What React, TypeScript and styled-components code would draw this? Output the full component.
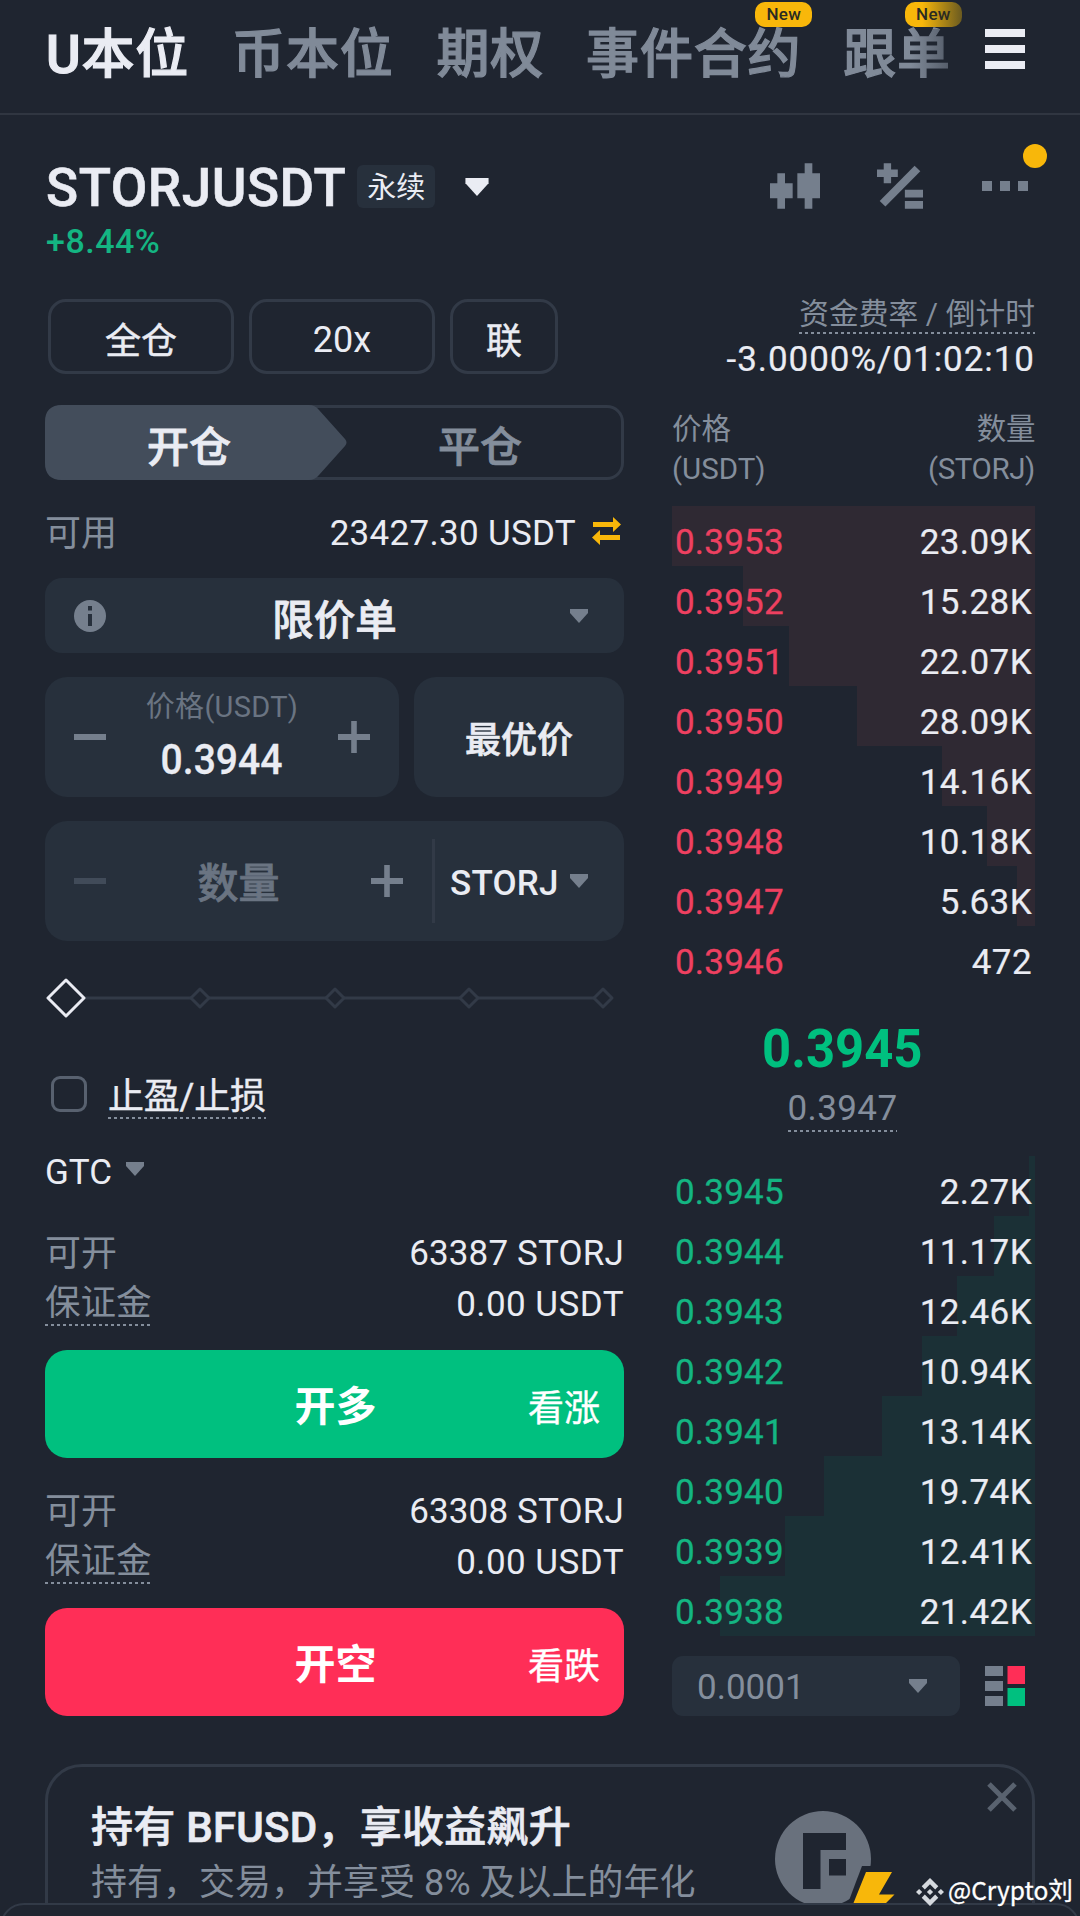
import React from "react";
import styled, { createGlobalStyle, css } from "styled-components";

const c = {
  bg: "#1f2530",
  field: "#27303c",
  line: "#323a47",
  text: "#eaecf3",
  mute: "#848e9c",
  icon: "#757f8d",
  dim: "#6a7482",
  gold: "#f8b70a",
  green: "#00c07f",
  priceUp: "#14b582",
  red: "#ff2e57",
  priceDown: "#ee4060",
};

const Global = createGlobalStyle`
  * { box-sizing: border-box; }
  html, body { margin: 0; padding: 0; background: ${c.bg}; }
  body { width: 1080px; height: 1916px; overflow: hidden; }
`;

const Page = styled.div`
  width: 1080px;
  height: 1916px;
  overflow: hidden;
  position: relative;
  background: ${c.bg};
  color: ${c.text};
  font-family: Roboto, "Noto Sans CJK SC", sans-serif;
  font-size: 35px;
  line-height: 1;
  white-space: nowrap;
`;

type TextProps = {
  $size?: number;
  $weight?: number;
  $color?: string;
  $ls?: number;
  $dy?: number;
  $bold?: number;
  $sx?: number;
};

const Txt = styled.span<TextProps>`
  display: block;
  font-size: ${(p) => p.$size ?? 35}px;
  font-weight: ${(p) => p.$weight ?? 400};
  color: ${(p) => p.$color ?? "inherit"};
  letter-spacing: ${(p) => p.$ls ?? 0}px;
  line-height: 40px;
  ${(p) => p.$dy !== undefined && css`margin-top: ${p.$dy}px;`}
  ${(p) => p.$bold !== undefined && css`-webkit-text-stroke: ${p.$bold}px currentColor;`}
  ${(p) => p.$sx !== undefined && css`transform: scaleX(${p.$sx});`}
`;

const Dotted = styled(Txt)<{ $pad?: number }>`
  padding-bottom: ${(p) => p.$pad ?? 3}px;
  background: repeating-linear-gradient(90deg, ${c.mute} 0 3px, transparent 3px 6px) left bottom / 100% 2px no-repeat;
`;

/* ---------- top navigation ---------- */

const Nav = styled.nav`
  height: 115px;
  border-bottom: 2px solid #303641;
  padding: 29px 55px 0 46px;
  display: flex;
  align-items: flex-start;
`;

const NavItem = styled.div<{ $active?: boolean; $gap: number }>`
  position: relative;
  font-size: 53px;
  line-height: 52px;
  font-weight: 500;
  letter-spacing: 0.8px;
  -webkit-text-stroke: 1.2px currentColor;
  margin-right: ${(p) => p.$gap}px;
  color: ${(p) => (p.$active ? c.text : "#808a98")};
`;

const NewBadge = styled.span<{ $fade?: boolean }>`
  position: absolute;
  top: -27px;
  right: -11px;
  width: 57px;
  height: 25px;
  border-radius: 10px;
  background: ${(p) => (p.$fade ? `linear-gradient(90deg, ${c.gold} 30%, #6a5a20 100%)` : c.gold)};
  color: #2a2a22;
  font-size: 17px;
  line-height: 25px;
  font-weight: 500;
  letter-spacing: 0.3px;
  text-align: center;
  -webkit-text-stroke: 0;
`;

const NavFade = styled.span`
  position: absolute;
  top: 0;
  right: -20px;
  width: 60px;
  height: 56px;
  background: linear-gradient(90deg, rgba(31, 37, 48, 0), rgba(31, 37, 48, 0.7));
`;

const Burger = styled.div`
  width: 40px;
  height: 40px;
  margin: 0 0 0 auto;
  display: flex;
  flex-direction: column;
  justify-content: space-between;
  & > i { height: 8px; background: ${c.text}; }
`;

/* ---------- pair header ---------- */

const PairHead = styled.header`
  height: 184px;
  padding: 47px 45px 0 46px;
  display: flex;
  justify-content: space-between;
`;

const PairRow = styled.div`
  display: flex;
  align-items: center;
  height: 50px;
`;

const Perp = styled.span`
  width: 78px;
  height: 43px;
  margin: -1px 30px 0 11px;
  border-radius: 6px;
  background: ${c.field};
  display: flex;
  align-items: center;
  justify-content: center;
  font-size: 29px;
  padding-top: 3px;
`;

const HeadIcons = styled.div`
  display: flex;
  align-items: flex-start;
  height: 60px;
  margin-top: 1px;
  svg { display: block; }
`;

const MoreWrap = styled.div`
  position: relative;
  margin: 18px 7px 0 59px;
`;

const Notice = styled.i`
  position: absolute;
  width: 24px;
  height: 24px;
  border-radius: 50%;
  background: ${c.gold};
  left: 41px;
  top: -37px;
`;

/* ---------- body columns ---------- */

const Columns = styled.main`
  height: 1465px;
  padding: 0 45px;
  display: grid;
  grid-template-columns: 579px 363px;
  column-gap: 48px;
`;

const Col = styled.section`
  display: flex;
  flex-direction: column;
  min-width: 0;
`;

const Modes = styled.div`
  display: flex;
  gap: 15px;
  padding-left: 3px;
`;

const ModeBtn = styled.button<{ $w: number; $latin?: boolean }>`
  width: ${(p) => p.$w}px;
  height: 75px;
  padding: ${(p) => (p.$latin ? 7 : 2)}px 0 0;
  border: 3px solid ${c.line};
  border-radius: 18px;
  background: none;
  color: ${c.text};
  font: 400 36px Roboto, "Noto Sans CJK SC", sans-serif;
  -webkit-text-stroke: ${(p) => (p.$latin ? 0 : 0.5)}px currentColor;
`;

const Tabs = styled.div`
  height: 75px;
  margin-top: 31px;
  display: grid;
  grid-template-columns: 302px 1fr;
  border-radius: 17px;
  box-shadow: inset 0 0 0 3px ${c.line};
`;

const Tab = styled.div<{ $active?: boolean }>`
  display: grid;
  align-items: center;
  font-size: 42px;
  line-height: 42px;
  font-weight: 500;
  -webkit-text-stroke: 0.8px currentColor;
  color: ${(p) => (p.$active ? c.text : c.mute)};
  text-align: center;
  & > * { grid-area: 1 / 1; }
  span { padding: 11px ${(p) => (p.$active ? 14 : 11)}px 0 0; z-index: 1; }
  svg { display: block; }
`;

const Row = styled.div<{ $h: number; $pt?: number; $align?: string }>`
  display: flex;
  align-items: ${(p) => p.$align ?? "center"};
  justify-content: space-between;
  height: ${(p) => p.$h}px;
  padding-top: ${(p) => p.$pt ?? 0}px;
`;

const Group = styled.div<{ $gap?: number }>`
  display: flex;
  align-items: center;
  gap: ${(p) => p.$gap ?? 0}px;
`;

const SwapIcon = styled.svg`
  margin: -6px 3px 0 0;
`;

const Field = styled.div<{ $h: number; $px?: number; $r?: number }>`
  height: ${(p) => p.$h}px;
  padding: 0 ${(p) => p.$px ?? 0}px;
  border-radius: ${(p) => p.$r ?? 22}px;
  background: ${c.field};
  display: flex;
  align-items: center;
  justify-content: space-between;
`;

const OrderType = styled(Field)`
  padding-right: 36px;
  & > span { padding-right: 7px; }
`;

const PriceRow = styled.div`
  display: grid;
  grid-template-columns: 354px 210px;
  gap: 15px;
  margin: 24px 0;
`;

const Stack = styled.div`
  display: flex;
  flex-direction: column;
  align-items: center;
`;

const Center = styled.div`
  flex: 1;
  display: flex;
  justify-content: center;
`;

const Divider = styled.i`
  width: 3px;
  height: 84px;
  background: ${c.line};
`;

const SizeUnit = styled.div`
  display: flex;
  align-items: center;
  justify-content: space-between;
  width: 189px;
  padding: 0 36px 0 15px;
`;

const SizeInput = styled.div`
  flex: 1;
  display: flex;
  align-items: center;
  padding: 0 29px 0 29px;
`;

const SliderSvg = styled.svg`
  display: block;
  margin-top: 32px;
`;

const Check = styled.i`
  width: 36px;
  height: 36px;
  margin: -9px 21px 0 6px;
  border: 3px solid #58616f;
  border-radius: 9px;
`;

const TradeBtn = styled.button<{ $bg: string }>`
  height: 108px;
  width: 100%;
  border: 0;
  border-radius: 22px;
  padding: 0 24px 3px 26px;
  background: ${(p) => p.$bg};
  color: #fff;
  display: grid;
  grid-template-columns: 1fr auto 1fr;
  align-items: center;
  font-family: inherit;
`;

const TradeSide = styled.span`
  font-size: 36px;
  text-align: right;
  padding-top: 5px;
  -webkit-text-stroke: 0.4px currentColor;
`;

const TradeMain = styled.span`
  grid-column: 2;
  font-size: 41px;
  font-weight: 700;
`;

/* ---------- order book ---------- */

const Funding = styled.div`
  height: 110px;
  display: flex;
  flex-direction: column;
  align-items: flex-end;
`;

const BookHead = styled.div`
  display: flex;
  justify-content: space-between;
  height: 97px;
  line-height: 40px;
  font-size: 29.5px;
  color: ${c.mute};
  & > div:last-child { text-align: right; letter-spacing: -0.4px; }
`;

const BookRow = styled.div<{ $ask?: boolean }>`
  height: 60px;
  padding: 12px 3px 0 3px;
  display: flex;
  justify-content: space-between;
  background: linear-gradient(${(p) => (p.$ask ? "#2f2933, #2f2933" : "#1b3036, #1b3036")}) no-repeat right top;
`;

const Last = styled.div`
  height: 170px;
  padding: 43px 22px 0 0;
  display: flex;
  flex-direction: column;
  align-items: center;
`;

const BookFoot = styled.div`
  display: flex;
  margin-top: 20px;
  gap: 25px;
  align-items: center;
`;

const Step = styled.div`
  width: 288px;
  height: 60px;
  border-radius: 11px;
  background: ${c.field};
  display: flex;
  align-items: center;
  justify-content: space-between;
  padding: 0 33px 0 25px;
`;

/* ---------- promo ---------- */

const Promo = styled.aside`
  height: 180px;
  margin: 0 45px;
  border: 3px solid ${c.line};
  border-radius: 37px 37px 0 0;
  padding: 37px 15px 0 43px;
  display: flex;
  justify-content: space-between;
`;

const PromoArt = styled.div`
  display: flex;
  margin-top: -22px;
  svg { display: block; }
`;

const CoinArt = styled.svg`
  margin: 29px 90px 0 0;
`;

const Sheet = styled.div`
  position: absolute;
  left: 0;
  right: 0;
  top: 1903px;
  height: 40px;
  border: 2px solid ${c.line};
  border-radius: 24px 24px 0 0;
  background: ${c.bg};
`;

const Watermark = styled.div`
  position: absolute;
  left: 916px;
  top: 1875px;
  display: flex;
  align-items: center;
  gap: 4px;
  height: 34px;
  color: #fff;
  font: 400 24.5px "Noto Sans CJK SC", sans-serif;
  span { margin-top: -5px; -webkit-text-stroke: 0.3px currentColor; }
`;

const Caret = ({ w = 18, h = 14, color = c.icon }: { w?: number; h?: number; color?: string }) => (
  <svg width={w} height={h} viewBox="0 0 18 14">
    <path d="M0 0H18V4L9 14L0 4Z" fill={color} />
  </svg>
);

const Minus = ({ color = c.icon }: { color?: string }) => (
  <svg width="32" height="32" viewBox="0 0 32 32">
    <rect y="13" width="32" height="6" fill={color} />
  </svg>
);

const Plus = () => (
  <svg width="32" height="32" viewBox="0 0 32 32">
    <path d="M13.2 0H18.8V13H32V19H18.8V32H13.2V19H0V13H13.2Z" fill={c.icon} />
  </svg>
);

const asks: [string, string, number][] = [
  ["0.3953", "23.09K", 363],
  ["0.3952", "15.28K", 292],
  ["0.3951", "22.07K", 246],
  ["0.3950", "28.09K", 178],
  ["0.3949", "14.16K", 93],
  ["0.3948", "10.18K", 48],
  ["0.3947", "5.63K", 18],
  ["0.3946", "472", 0],
];

const bids: [string, string, number][] = [
  ["0.3945", "2.27K", 6],
  ["0.3944", "11.17K", 41],
  ["0.3943", "12.46K", 78],
  ["0.3942", "10.94K", 113],
  ["0.3941", "13.14K", 153],
  ["0.3940", "19.74K", 211],
  ["0.3939", "12.41K", 250],
  ["0.3938", "21.42K", 315],
];

const Book = ({ rows, ask }: { rows: [string, string, number][]; ask?: boolean }) => (
  <div>
    {rows.map(([price, qty, depth]) => (
      <BookRow key={price} $ask={ask} style={{ backgroundSize: `${depth}px 60px` }}>
        <Txt $dy={5} $ls={0.2} $bold={0.3} $color={ask ? c.priceDown : c.priceUp}>{price}</Txt>
        <Txt $dy={5} $ls={0.4} $bold={0.2}>{qty}</Txt>
      </BookRow>
    ))}
  </div>
);

const Trade = ({ max, label, hint, color }: { max: string; label: string; hint: string; color: string }) => (
  <>
    <Row $h={50} $pt={2}>
      <Txt $color={c.mute} $size={36}>可开</Txt>
      <Txt $ls={0.15}>{max}</Txt>
    </Row>
    <Row $h={72} $align="flex-start" $pt={5}>
      <Dotted $color={c.mute} $size={35.5} $pad={3}>保证金</Dotted>
      <Txt $dy={2} $ls={0.45}>0.00 USDT</Txt>
    </Row>
    <TradeBtn $bg={color}>
      <TradeMain>{label}</TradeMain>
      <TradeSide>{hint}</TradeSide>
    </TradeBtn>
  </>
);

const smallDiamonds = [155, 290, 424, 558];

export default function App() {
  return (
    <Page>
      <Global />
      <Nav>
        <NavItem $active $gap={43}>U本位</NavItem>
        <NavItem $gap={43}>币本位</NavItem>
        <NavItem $gap={42}>期权</NavItem>
        <NavItem $gap={42}>事件合约<NewBadge>New</NewBadge></NavItem>
        <NavItem $gap={0}>跟单<NewBadge $fade>New</NewBadge><NavFade /></NavItem>
        <Burger><i /><i /><i /></Burger>
      </Nav>

      <PairHead>
        <div>
          <PairRow>
            <Txt $size={53} $weight={500} $ls={0.55} $bold={0.6} $dy={1}>STORJUSDT</Txt>
            <Perp>永续</Perp>
            <Caret w={24} h={18} color={c.text} />
          </PairRow>
          <Txt $size={34} $weight={500} $ls={0.5} $color={c.priceUp} $dy={9}>+8.44%</Txt>
        </div>
        <HeadIcons>
          <svg width="50" height="46" viewBox="0 0 150 136" fill={c.icon}>
            <path d="M22 30H45V60H68V105H45V136H22V105H0V60H22Z" />
            <path d="M104 0H127V30H150V105H127V136H104V105H82V30H104Z" />
          </svg>
          <svg width="46" height="46" viewBox="0 0 137 136" fill={c.icon} style={{ marginLeft: 57 }}>
            <path d="M20 0H42V19H62V41H42V60H20V41H0V19H20Z" />
            <path d="M112 8L129 24L25 129L8 113Z" />
            <path d="M83 79H137V102H83ZM83 113H137V136H83Z" />
          </svg>
          <MoreWrap>
            <svg width="46" height="10" viewBox="0 0 46 10" fill={c.icon}>
              <path d="M0 0H10V10H0ZM18 0H28V10H18ZM36 0H46V10H36Z" />
            </svg>
            <Notice />
          </MoreWrap>
        </HeadIcons>
      </PairHead>

      <Columns>
        <Col>
          <Modes>
            <ModeBtn $w={186}>全仓</ModeBtn>
            <ModeBtn $w={186} $latin>20x</ModeBtn>
            <ModeBtn $w={108}>联</ModeBtn>
          </Modes>

          <Tabs>
            <Tab $active>
              <svg width="302" height="75" viewBox="0 0 302 75">
                <path d="M17 0H264Q270 0 274 5L300 34Q303 37.500 300 41L274 70Q270 75 264 75H17Q0 75 0 58V17Q0 0 17 0Z" fill="#434d5b" />
              </svg>
              <span>开仓</span>
            </Tab>
            <Tab><span>平仓</span></Tab>
          </Tabs>

          <Row $h={98} $pt={10}>
            <Txt $color={c.mute} $size={36}>可用</Txt>
            <Group $gap={16}>
              <Txt $ls={0.3}>23427.30 USDT</Txt>
              <SwapIcon width="29" height="28" viewBox="0 0 29 28" fill={c.gold}>
                <path d="M1 5H21V0L29 7.500L21 15V10H1Z" />
                <path d="M28 18H8V13L0 20.500L8 28V23H28Z" />
              </SwapIcon>
            </Group>
          </Row>

          <OrderType $h={75} $px={29} $r={17}>
            <svg width="32" height="32" viewBox="0 0 32 32">
              <circle cx="16" cy="16" r="16" fill={c.icon} />
              <path d="M14 6H18V10.500H14ZM14 14H18V26H14Z" fill={c.field} />
            </svg>
            <Txt $size={41.5} $weight={500} $bold={0.8} $dy={10}>限价单</Txt>
            <Caret />
          </OrderType>

          <PriceRow>
            <Field $h={120} $px={29}>
              <Minus />
              <Stack>
                <Txt $size={29} $color={c.dim} $ls={0.3} $dy={-8}>价格(USDT)</Txt>
                <Txt $size={42} $weight={500} $sx={0.93} $bold={0.3} $dy={13}>0.3944</Txt>
              </Stack>
              <Plus />
            </Field>
            <Field $h={120}>
              <Center><Txt $size={36} $weight={500} $bold={0.7} $dy={7}>最优价</Txt></Center>
            </Field>
          </PriceRow>

          <Field $h={120}>
            <SizeInput>
              <Minus color="#414b59" />
              <Center><Txt $size={41} $weight={500} $bold={0.8} $color={c.dim} $dy={5}>数量</Txt></Center>
              <Plus />
            </SizeInput>
            <Divider />
            <SizeUnit>
              <Txt $weight={500} $ls={0.2} $dy={6}>STORJ</Txt>
              <Caret />
            </SizeUnit>
          </Field>

          <SliderSvg width="579" height="50" viewBox="0 0 579 50" fill={c.bg}>
            <path d="M40 25H558" stroke={c.line} strokeWidth="3" />
            {smallDiamonds.map((x) => (
              <path key={x} d={`M${x} 16L${x + 9} 25L${x} 34L${x - 9} 25Z`} stroke={c.line} strokeWidth="3" strokeLinejoin="round" />
            ))}
            <path d="M21 7L39 25L21 43L3 25Z" stroke={c.text} strokeWidth="3" strokeLinejoin="round" />
          </SliderSvg>

          <Row $h={96} $pt={54} $align="flex-start">
            <Group>
              <Check />
              <Dotted $size={36} $pad={2} $ls={-0.2} $bold={0.4}>止盈/止损</Dotted>
            </Group>
          </Row>

          <Row $h={109} $pt={34} $align="flex-start">
            <Group $gap={14}>
              <Txt>GTC</Txt>
              <Group style={{ marginTop: -8 }}><Caret /></Group>
            </Group>
          </Row>

          <Trade max="63387 STORJ" label="开多" hint="看涨" color={c.green} />
          <Row $h={28} />
          <Trade max="63308 STORJ" label="开空" hint="看跌" color={c.red} />
        </Col>

        <Col>
          <Funding>
            <Dotted $size={29.7} $ls={0.1} $color={c.mute} $dy={-5} $pad={0}>资金费率 / 倒计时</Dotted>
            <Txt $dy={6} $ls={0.95} $bold={0.2}>-3.0000%/01:02:10</Txt>
          </Funding>
          <BookHead>
            <div>价格<br />(USDT)</div>
            <div>数量<br />(STORJ)</div>
          </BookHead>
          <Book rows={asks} ask />
          <Last>
            <Txt $size={54} $weight={700} $color={c.green} $sx={0.94}>0.3945</Txt>
            <Dotted $color={c.mute} $ls={0.4} $dy={20} $pad={3}>0.3947</Dotted>
          </Last>
          <Book rows={bids} />
          <BookFoot>
            <Step>
              <Txt $color={c.mute} $dy={3}>0.0001</Txt>
              <Caret />
            </Step>
            <svg width="40" height="40" viewBox="0 0 40 40">
              <path d="M0 0H18V10H0ZM0 15H18V25H0ZM0 30H18V40H0Z" fill={c.icon} />
              <rect x="22.500" width="17.500" height="18" fill={c.red} />
              <rect x="22.500" y="22" width="17.500" height="18" fill={c.green} />
            </svg>
          </BookFoot>
        </Col>
      </Columns>

      <Promo>
        <div>
          <Txt $size={42} $weight={500} $bold={0.7} $ls={0.25} $dy={4}>持有 BFUSD，享收益飙升</Txt>
          <Txt $size={36} $color={c.mute} $dy={15}>持有，交易，并享受 8% 及以上的年化</Txt>
        </div>
        <PromoArt>
          <CoinArt width="122" height="100" viewBox="0 0 122 100">
            <circle cx="48" cy="48" r="48" fill="#69717d" />
            <path d="M28 22H71V39H45.500V78H28ZM54 48H71V64.500H54Z" fill={c.bg} />
            <path d="M87 55H100V100H70Z" fill={c.bg} />
            <path d="M91 61H117L104 83.500H119.500L111 92H78.500Z" fill={c.gold} />
          </CoinArt>
          <svg width="30" height="30" viewBox="0 0 30 30">
            <path d="M2 2L28 28M28 2L2 28" stroke="#59626f" strokeWidth="5" />
          </svg>
        </PromoArt>
      </Promo>

      <Sheet />
      <Watermark>
        <svg width="28" height="28" viewBox="0 0 28 28" fill="#d5d9de">
          <path d="M14 0L22.300 8.300L19.200 11.400L14 6.200L8.800 11.400L5.700 8.300Z" />
          <path d="M14 28L22.300 19.700L19.200 16.600L14 21.800L8.800 16.600L5.700 19.700Z" />
          <path d="M3.100 10.900L6.200 14L3.100 17.100L0 14ZM24.900 10.900L28 14L24.900 17.100L21.800 14ZM14 10.900L17.100 14L14 17.100L10.900 14Z" />
        </svg>
        <span>@Crypto刘</span>
      </Watermark>
    </Page>
  );
}
